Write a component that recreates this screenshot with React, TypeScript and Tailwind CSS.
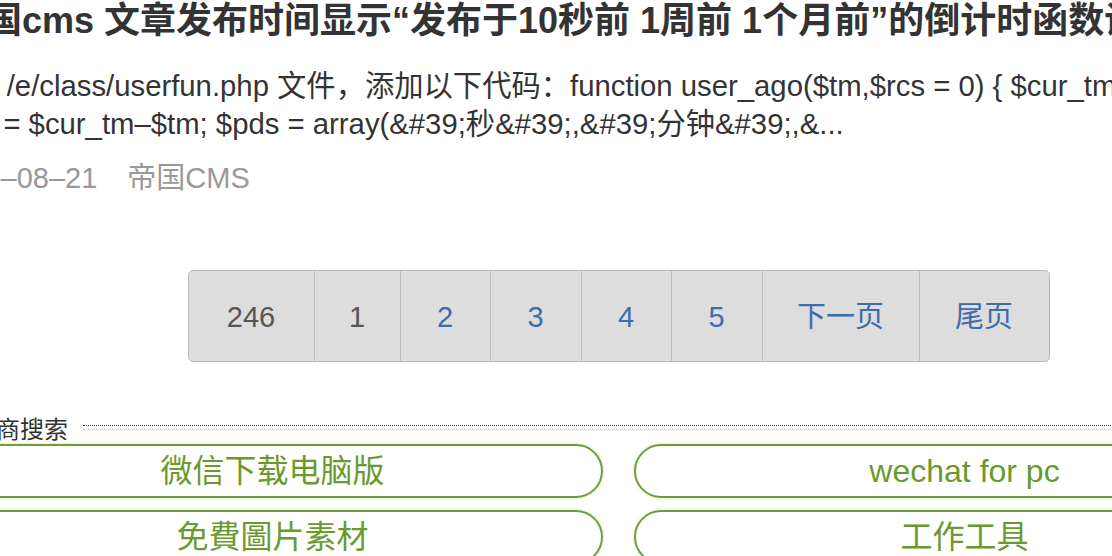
import React from "react";

const line1 =
  "打开 /e/class/userfun.php 文件，添加以下代码：function user_ago($tm,$rcs = 0) { $cur_tm = time(); $dif";
const line2 =
  "$dif = $cur_tm–$tm; $pds = array(&#39;秒&#39;,&#39;分钟&#39;,&...";

type Cell = { label: string; w: string; link: boolean; first?: boolean };

const cells: Cell[] = [
  { label: "246", w: "w-[125px]", link: false, first: true },
  { label: "1", w: "w-[86px]", link: false },
  { label: "2", w: "w-[90px]", link: true },
  { label: "3", w: "w-[91px]", link: true },
  { label: "4", w: "w-[90px]", link: true },
  { label: "5", w: "w-[91px]", link: true },
  { label: "下一页", w: "w-[157px]", link: true },
  { label: "尾页", w: "w-[130px]", link: true },
];

const buttons = ["微信下载电脑版", "wechat for pc", "免費圖片素材", "工作工具"];

export default function App() {
  return (
    <div className="w-[1112px] h-[556px] overflow-hidden bg-white font-['Liberation_Sans','Noto_Sans_CJK_SC',sans-serif]">
      <div className="w-[1353px] ml-[-58px] px-[8px]">
        <h1 className="text-[36px] leading-[42px] font-bold text-[#333] whitespace-nowrap">
          帝国cms 文章发布时间显示“发布于10秒前 1周前 1个月前”的倒计时函数设置
        </h1>
        <div className="mt-[25px] text-[29.3px] leading-[38px] text-[#333] whitespace-nowrap">
          <div className="ml-[-10px]">{line1}</div>
          <div className="ml-[-2px]">{line2}</div>
        </div>
        <div className="mt-[16px] text-[29px] leading-[38px] text-[#999] whitespace-nowrap">
          <span className="ml-[-14px]">2019–08–21</span>
          <span className="ml-[30px]">帝国CMS</span>
        </div>
        <div className="mt-[73px] flex justify-center">
          <div className="flex h-[92px] border border-[#bbb] rounded-[5px] bg-[#dddddd] overflow-hidden">
            {cells.map((c) => (
              <div
                key={c.label}
                className={`${c.w} ${c.first ? "" : "border-l border-[#bbb]"} flex items-center justify-center pt-[3px] text-[29px] ${
                  c.link ? "text-[#3d6cad]" : "text-[#555]"
                }`}
              >
                {c.label}
              </div>
            ))}
          </div>
        </div>
        <div className="mt-[54px] flex items-start">
          <div className="text-[24px] leading-[28px] text-[#333] whitespace-nowrap ml-[-2px]">服务商搜索</div>
          <div className="flex-1 ml-[15px] mt-[9px] h-[5px] border-t border-b border-dotted border-t-[#333] border-b-[#ccc]" />
        </div>
        <div className="mx-[-8px] grid grid-cols-2 gap-x-[31px] gap-y-[12px]">
          {buttons.map((b) => (
            <div
              key={b}
              className="h-[54px] rounded-full border-2 border-[#6f9d3a] flex items-center justify-center text-[32px] text-[#6a9a2e] shadow-[0_0_3px_rgba(111,157,58,0.35)]"
            >
              {b}
            </div>
          ))}
        </div>
      </div>
    </div>
  );
}
